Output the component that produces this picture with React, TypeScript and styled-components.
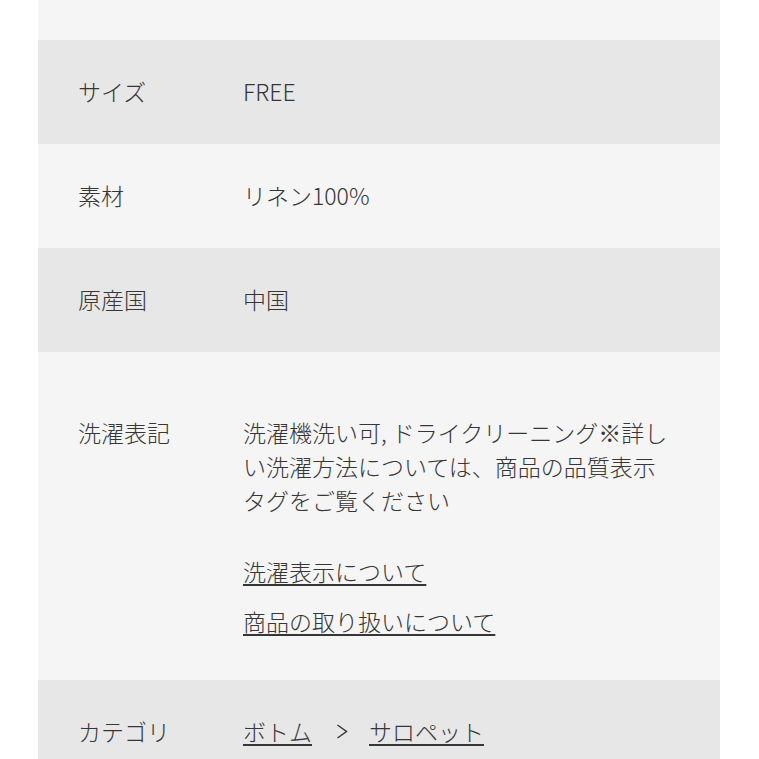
import React from "react";
import styled, { createGlobalStyle } from "styled-components";

const Global = createGlobalStyle`
  html, body {
    margin: 0;
    padding: 0;
    background: #ffffff;
    overflow: hidden;
  }
  body {
    font-family: "Noto Sans CJK JP", "Noto Sans", sans-serif;
    font-weight: 300;
    color: #363636;
  }
`;

const Page = styled.div`
  height: 759px;
  overflow: hidden;
  padding: 0 39px 0 38px;
  box-sizing: border-box;
`;

const Table = styled.div`
  display: flex;
  flex-direction: column;
`;

const Row = styled.div<{ $shade: "gray" | "light"; $pt?: number; $pb?: number }>`
  display: grid;
  grid-template-columns: 165px 432px;
  align-items: start;
  background: ${(p) => (p.$shade === "gray" ? "#e7e7e7" : "#f5f5f5")};
  padding: ${(p) => p.$pt ?? 34}px 0 ${(p) => p.$pb ?? 36}px 40px;
  box-sizing: border-box;
  font-size: 23px;
  line-height: 34px;
`;

const Spacer = styled.div`
  height: 40px;
  background: #f5f5f5;
`;

const Label = styled.div`
  white-space: nowrap;
`;

const Value = styled.div`
  word-break: break-all;
  line-break: strict;
`;

const Paragraph = styled.p`
  margin: 0;
`;

const LinkList = styled.div`
  display: flex;
  flex-direction: column;
  align-items: flex-start;
  gap: 16px;
  margin-top: 37px;
`;

const TextLink = styled.a`
  color: #363636;
  text-decoration: underline;
  text-decoration-thickness: 2px;
  text-underline-offset: 3px;
  cursor: pointer;
`;

const Crumbs = styled.div`
  display: flex;
  align-items: center;
`;

const Chevron = styled.svg`
  width: 12px;
  height: 17px;
  margin: 0 21px 0 24px;
  flex: none;
`;

export default function App() {
  return (
    <>
      <Global />
      <Page>
        <Table>
          <Spacer />
          <Row $shade="gray">
            <Label>サイズ</Label>
            <Value>FREE</Value>
          </Row>
          <Row $shade="light">
            <Label>素材</Label>
            <Value>リネン100%</Value>
          </Row>
          <Row $shade="gray">
            <Label>原産国</Label>
            <Value>中国</Value>
          </Row>
          <Row $shade="light" $pt={63} $pb={42}>
            <Label>洗濯表記</Label>
            <Value>
              <Paragraph>
                洗濯機洗い可, ドライクリーニング※詳しい洗濯方法については、商品の品質表示タグをご覧ください
              </Paragraph>
              <LinkList>
                <TextLink>洗濯表示について</TextLink>
                <TextLink>商品の取り扱いについて</TextLink>
              </LinkList>
            </Value>
          </Row>
          <Row $shade="gray">
            <Label>カテゴリ</Label>
            <Crumbs>
              <TextLink>ボトム</TextLink>
              <Chevron viewBox="0 0 12 17" aria-hidden="true">
                <path d="M1.5 2 L10.5 8.5 L1.5 15" fill="none" stroke="#363636" strokeWidth="1.5" />
              </Chevron>
              <TextLink>サロペット</TextLink>
            </Crumbs>
          </Row>
        </Table>
      </Page>
    </>
  );
}
